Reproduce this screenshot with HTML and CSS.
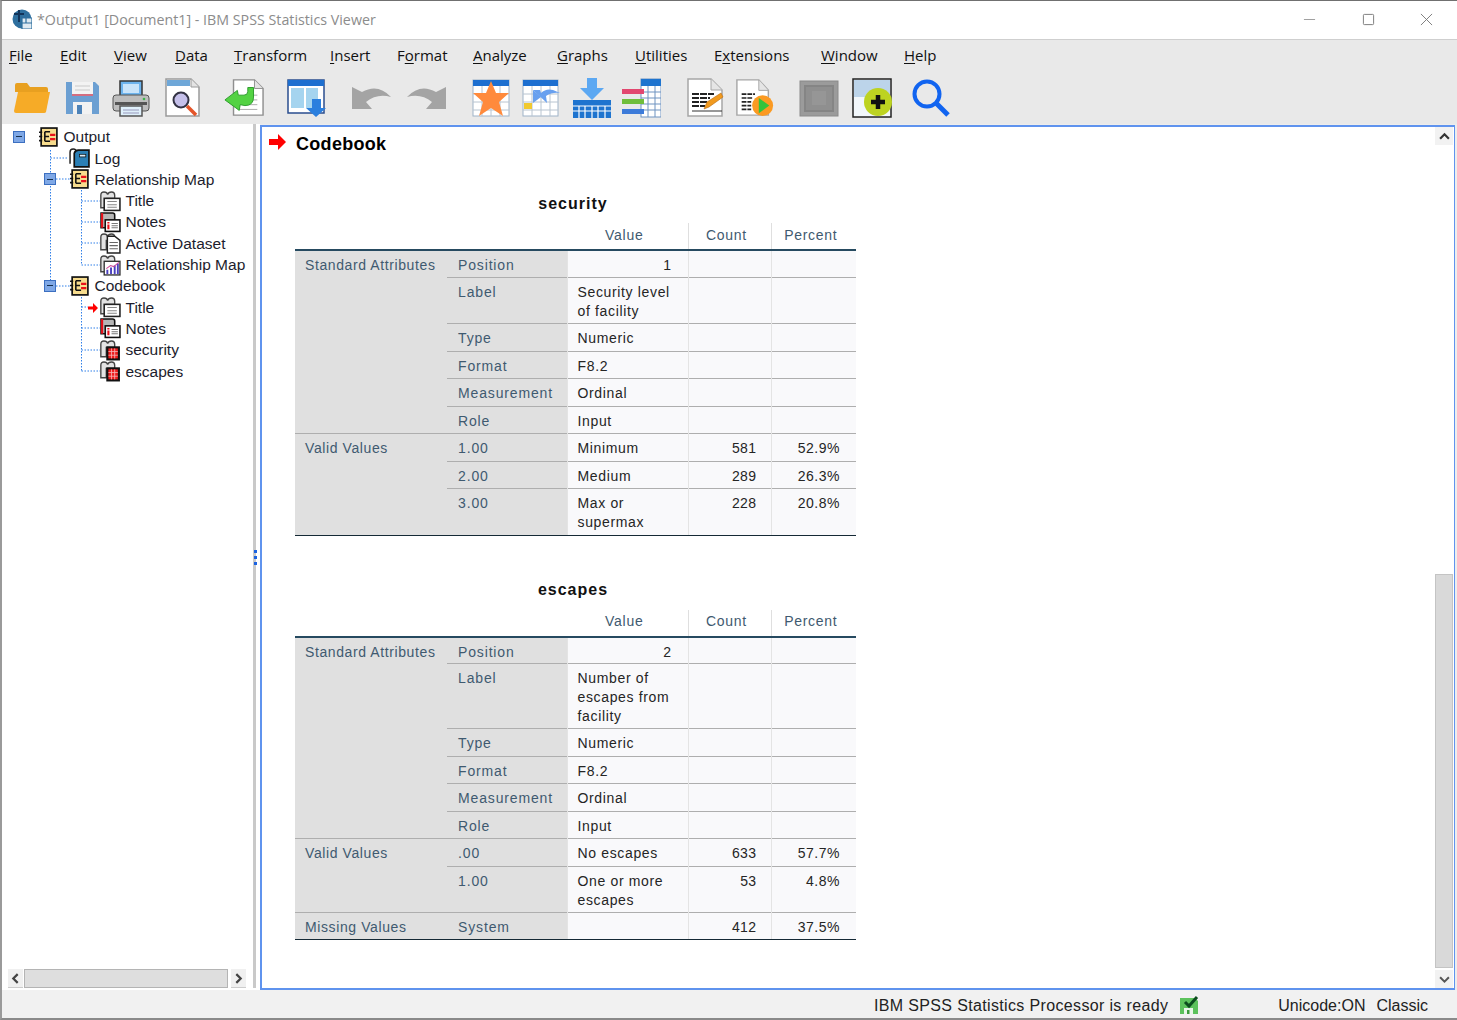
FILE: index.html
```html
<!DOCTYPE html>
<html lang="en">
<head>
<meta charset="utf-8">
<title>*Output1 [Document1] - IBM SPSS Statistics Viewer</title>
<link rel="stylesheet" href="styles.css">
</head>
<body>
<svg class="defs" width="0" height="0" aria-hidden="true">
  <defs>
    <symbol id="t-output" viewBox="0 0 20 20">
      <rect x="3" y="1" width="15" height="17" fill="#f7dc8d" stroke="#111" stroke-width="1.6"/>
      <path d="M1 5h3M1 9h3M1 13h3" stroke="#111" stroke-width="1.5"/>
      <path d="M6.5 4.5h5M6.5 4.5v9M6.5 9h4M6.5 13.500h5" stroke="#111" stroke-width="1.500" fill="none"/>
      <path d="M11.500 7.500h5M11.500 11.500h5" stroke="#e8101a" stroke-width="2.200"/>
    </symbol>
    <symbol id="t-log" viewBox="0 0 20 20">
      <path d="M1 15V4q0-3 3-3t3 3v11" fill="#fff" stroke="#222" stroke-width="1.400"/>
      <path d="M5 18V5q1-3 4-3h10v16z" fill="#2b7fb5" stroke="#111" stroke-width="1.600"/>
      <rect x="10" y="6" width="6" height="2.500" fill="#dceefa" stroke="#111" stroke-width=".7"/>
    </symbol>
    <symbol id="book" viewBox="0 0 20 20">
      <path d="M.8 16V4q0-3 3-3t3.500 2.500Q8 1 11 1t3 3v3H6v9z" fill="#e3e3e3" stroke="#444" stroke-width="1.300"/>
    </symbol>
    <symbol id="t-title" viewBox="0 0 20 20">
      <use href="#book"/>
      <rect x="4" y="7" width="15" height="11.500" fill="#fff" stroke="#222" stroke-width="1.500"/>
      <path d="M7 10h9M7 13h9M7 15.500h9" stroke="#888" stroke-width="1"/>
    </symbol>
    <symbol id="t-notes" viewBox="0 0 20 20">
      <path d="M1 15V1h11q2 0 2 2v5H6v7z" fill="#b6b6b6" stroke="#111" stroke-width="1.500"/>
      <path d="M2 1v14" stroke="#e8101a" stroke-width="2"/>
      <rect x="5" y="7.500" width="14" height="11" fill="#fff" stroke="#111" stroke-width="1.500"/>
      <path d="M8 9.500v1.500M8 12v4.500" stroke="#e8101a" stroke-width="2"/>
      <path d="M11 11h6M11 13h6M11 15h6" stroke="#777"/>
    </symbol>
    <symbol id="t-data" viewBox="0 0 20 20">
      <use href="#book"/>
      <path d="M7 3h7l5 4v12H7z" fill="#fff" stroke="#222" stroke-width="1.400"/>
      <path d="M9 9h8M9 12h8M9 15h8" stroke="#666"/>
    </symbol>
    <symbol id="t-chart" viewBox="0 0 20 20">
      <use href="#book"/>
      <rect x="4" y="6" width="15" height="13" fill="#fff" stroke="#333" stroke-width="1.300"/>
      <path d="M7 18v-4M10.500 18v-6M14 18v-8M17 18V8" stroke="#4a3fc0" stroke-width="1.800"/>
      <path d="M6 13l4-3 3 1 5-4" stroke="#d04a9a" fill="none"/>
    </symbol>
    <symbol id="t-table" viewBox="0 0 20 20">
      <use href="#book"/>
      <rect x="6" y="6" width="13" height="13.500" fill="#111"/>
      <rect x="8" y="8" width="9" height="9.500" fill="#ef1c1c"/>
      <path d="M11 8v9.500M14 8v9.500M8 11h9M8 14.500h9" stroke="#f5b5b5" stroke-width=".8"/>
    </symbol>
  </defs>
</svg>

<div class="window">
  <header class="titlebar">
    <svg class="app-icon" viewBox="0 0 20 20" aria-hidden="true">
      <circle cx="10" cy="10" r="9.500" fill="#2e6f9e"/>
      <rect x="10" y="9" width="10" height="11" fill="#dfeaf2"/>
      <path d="M2 5h10M7 1v12" stroke="#12345a" stroke-width="2"/>
      <path d="M10 9h10v11H10zM14 9v5M10 14h10" stroke="#2e6f9e" stroke-width="1.200" fill="none"/>
    </svg>
    <span class="title-text">*Output1 [Document1] - IBM SPSS Statistics Viewer</span>
    <div class="win-controls">
      <svg viewBox="0 0 14 14" aria-hidden="true"><path d="M1 7h12" stroke="#999" stroke-width="1"/></svg>
      <svg viewBox="0 0 14 14" aria-hidden="true"><rect x="1.500" y="1.500" width="11" height="11" rx="1" fill="none" stroke="#777"/></svg>
      <svg viewBox="0 0 14 14" aria-hidden="true"><path d="M1 1l12 12M13 1L1 13" stroke="#777"/></svg>
    </div>
  </header>

  <nav class="menubar">
    <span><u>F</u>ile</span><span><u>E</u>dit</span><span><u>V</u>iew</span><span><u>D</u>ata</span><span><u>T</u>ransform</span><span><u>I</u>nsert</span><span>F<u>o</u>rmat</span><span><u>A</u>nalyze</span><span><u>G</u>raphs</span><span><u>U</u>tilities</span><span>E<u>x</u>tensions</span><span><u>W</u>indow</span><span><u>H</u>elp</span>
  </nav>

  <div class="toolbar">
    <svg viewBox="0 0 40 40" aria-hidden="true"><path d="M3 7q0-2 2-2h10l3 4h16q2 0 2 2v3H3z" fill="#e8a020"/><path d="M6 14h32l-4 20q-.5 1-2 1H4q-2 0-2-2z" fill="#f6ab27"/></svg>
    <svg viewBox="0 0 40 40" aria-hidden="true"><path d="M4 4h29l4 4v28H4z" fill="#6b9fd2"/><rect x="10" y="4" width="21" height="14" fill="#f3f3f3"/><path d="M13 8h15M13 12h15" stroke="#c9c9c9"/><path d="M10 17h21" stroke="#c8405a" stroke-width="1.500"/><rect x="11" y="24" width="19" height="12" fill="#f2f2f2"/><rect x="15" y="27" width="5" height="9" fill="#4c82b8"/></svg>
    <svg viewBox="0 0 40 40" aria-hidden="true"><rect x="9" y="3" width="22" height="16" fill="#6db4ee" stroke="#333" stroke-width="1.500"/><rect x="12" y="6" width="16" height="9" fill="#c9e4fa"/><path d="M5 17h30q3 0 3 3v10q0 3-3 3H5q-3 0-3-3V20q0-3 3-3z" fill="#bdbdbd" stroke="#555"/><rect x="4" y="24" width="32" height="3" fill="#555"/><circle cx="33" cy="21" r="1.300" fill="#3cb54a"/><rect x="9" y="28" width="22" height="10" fill="#dff0fb" stroke="#555" stroke-width="1.500"/><path d="M12 32h16M12 35h16" stroke="#99b"/></svg>
    <svg viewBox="0 0 40 40" aria-hidden="true"><path d="M4 1h25l8 8v29H4z" fill="#fff" stroke="#9a9a9a" stroke-width="1.500"/><rect x="5" y="2" width="23" height="6" fill="#6ea7d8"/><path d="M29 1v8h8" fill="#e4e4e4" stroke="#9a9a9a"/><circle cx="19" cy="22" r="7.500" fill="#c5c0ea" stroke="#334" stroke-width="2"/><path d="M25 28l9 9" stroke="#e4552a" stroke-width="3.500"/></svg>
    <svg viewBox="0 0 42 40" aria-hidden="true"><path d="M10 1h22l9 9v28H10z" fill="#fff" stroke="#8f8f8f" stroke-width="1.500"/><path d="M32 1v9h9" fill="#e4e4e4" stroke="#8f8f8f"/><path d="M26 17h9M26 22h9M26 27h9M16 32h19" stroke="#ababab"/><path d="M1 22L14 12l1 5h6q4 0 4-4V9h6v10q0 9-9 9l-5-1-1 6z" fill="#53d243" stroke="#2b9b2b"/></svg>
    <svg viewBox="0 0 40 40" aria-hidden="true"><rect x="2" y="2" width="36" height="33" fill="#fff" stroke="#2a4d8f" stroke-width="1.500"/><rect x="2" y="2" width="36" height="6" fill="#1d6fd0"/><rect x="5" y="10" width="13" height="20" fill="#a5d4ef"/><rect x="20" y="10" width="12" height="20" fill="#a5d4ef"/><path d="M28 22h9v9h5l-10 9-10-9h6z" transform="translate(-2 -1)" fill="#2b7fde"/></svg>
    <svg viewBox="0 0 40 40" aria-hidden="true"><path d="M1 9v22h20l-6-7q11-9 25-5Q27 5 11 14z" fill="#a4a4a4"/></svg>
    <svg viewBox="0 0 40 40" aria-hidden="true"><path d="M39 9v22H19l6-7Q14 15 0 19q13-14 29-5z" fill="#a4a4a4"/></svg>
    <svg viewBox="0 0 40 40" aria-hidden="true"><rect x="2" y="2" width="36" height="36" fill="#fff" stroke="#9fb3c8"/><rect x="2" y="2" width="36" height="6" fill="#1d6fd0"/><path d="M2 16h36M2 24h36M2 32h36M11 8v30M20 8v30M29 8v30" stroke="#b8c4d0"/><path d="M20 3l5 12h13l-10 9 4 14-12-8-12 8 4-14-10-9h13z" fill="#ff8a3c"/></svg>
    <svg viewBox="0 0 40 40" aria-hidden="true"><rect x="2" y="2" width="35" height="36" fill="#fff" stroke="#9fb3c8"/><rect x="2" y="2" width="35" height="6" fill="#1d6fd0"/><path d="M2 16h35M2 24h35M2 32h35M11 8v30M20 8v30M29 8v30" stroke="#b8c4d0"/><rect x="3" y="25" width="8" height="6" fill="#f1c92f"/><path d="M12 12h7l1 3q5-5 12-3l7 3q-8-1-14 3l1 7z" fill="#68a0ef"/><path d="M12 12v13l8-6z" fill="#68a0ef"/></svg>
    <svg viewBox="0 0 40 40" aria-hidden="true"><path d="M15 0h10v10h7L20 22 8 10h7z" fill="#5ca8f2"/><rect x="1" y="22" width="38" height="18" fill="#1e74cf"/><path d="M1 28h38M1 33h38M7 28v12M13 28v12M20 28v12M26 28v12M33 28v12" stroke="#fff" stroke-width="1.200"/></svg>
    <svg viewBox="0 0 40 40" aria-hidden="true"><rect x="20" y="1" width="20" height="38" fill="#fff" stroke="#6f93c0"/><rect x="20" y="1" width="20" height="7" fill="#1e74cf"/><path d="M20 14h20M20 20h20M20 26h20M20 32h20M27 8v31M34 8v31" stroke="#6f93c0"/><rect x="1" y="11" width="22" height="5" fill="#e2476f"/><rect x="1" y="21" width="22" height="5" fill="#6fbe3b"/><rect x="1" y="31" width="22" height="5" fill="#3d7bd9"/></svg>
    <svg viewBox="0 0 40 40" aria-hidden="true"><path d="M3 1h23l11 11v26H3z" fill="#fff" stroke="#a6a6a6" stroke-width="1.500"/><path d="M26 1v11h11" fill="#e5e5e5" stroke="#a6a6a6"/><path d="M7 16h22M7 20h18M7 24h15M7 28h13" stroke="#222" stroke-width="1.800" stroke-dasharray="7 1"/><path d="M7 33h30" stroke="#333"/><path d="M19 31l3-7 14-9 2 4-14 10z" fill="#f19a1e" stroke="#b76a10" stroke-width=".6"/></svg>
    <svg viewBox="0 0 42 40" aria-hidden="true"><path d="M2 1h23l10 11v26H2z" fill="#fff" stroke="#a6a6a6" stroke-width="1.500"/><path d="M25 1v11h10" fill="#e5e5e5" stroke="#a6a6a6"/><path d="M7 16h14M7 20h12M7 24h10M7 28h10M7 32h10" stroke="#222" stroke-width="1.800" stroke-dasharray="5 1"/><circle cx="29" cy="28" r="11" fill="#fb9a22"/><path d="M25 20l11 8-11 8z" fill="#35c33b"/></svg>
    <svg viewBox="0 0 40 40" aria-hidden="true"><rect x="1" y="3" width="38" height="35" fill="#9b9b9b" stroke="#8a8a8a"/><rect x="6" y="8" width="28" height="25" fill="#8f8f8f" stroke="#858585" stroke-width="2"/><rect x="13" y="13" width="14" height="14" fill="#969696"/></svg>
    <svg viewBox="0 0 40 40" aria-hidden="true"><rect x="1" y="1" width="38" height="38" fill="#f2f7fb" stroke="#222" stroke-width="1.500"/><rect x="2" y="2" width="36" height="17" fill="#bcd4ea"/><circle cx="26" cy="24" r="14" fill="#bdd321"/><path d="M26 17v14M19 24h14" stroke="#111" stroke-width="4.500"/></svg>
    <svg viewBox="0 0 40 40" aria-hidden="true"><circle cx="16" cy="16" r="12.500" fill="none" stroke="#1164f0" stroke-width="4"/><path d="M25 25l12 12" stroke="#1164f0" stroke-width="5"/></svg>
  </div>

  <main class="panes">
    <aside class="outline">
      <div class="tree">
        <svg class="tree-lines" aria-hidden="true">
          <g fill="none" stroke="#2f7fe8" stroke-dasharray="1.500 1.500">
            <path d="M50.500 150V286M50.500 158H68M56 179H70M56 286H70M81.500 190V265M81.500 201H100M81.500 222H100M81.500 243H100M81.500 265H100M81.500 297V371M81.500 307H88M81.500 328H100M81.500 350H100M81.500 371H100"/>
          </g>
        </svg>
        <div class="node l0"><span class="toggle"></span><svg class="ni"><use href="#t-output"/></svg><span>Output</span></div>
        <div class="node l1"><svg class="ni"><use href="#t-log"/></svg><span>Log</span></div>
        <div class="node l1"><span class="toggle"></span><svg class="ni"><use href="#t-output"/></svg><span>Relationship Map</span></div>
        <div class="node l2"><svg class="ni"><use href="#t-title"/></svg><span>Title</span></div>
        <div class="node l2"><svg class="ni"><use href="#t-notes"/></svg><span>Notes</span></div>
        <div class="node l2"><svg class="ni"><use href="#t-data"/></svg><span>Active Dataset</span></div>
        <div class="node l2"><svg class="ni"><use href="#t-chart"/></svg><span>Relationship Map</span></div>
        <div class="node l1"><span class="toggle"></span><svg class="ni"><use href="#t-output"/></svg><span>Codebook</span></div>
        <div class="node l2"><svg class="tree-arrow" viewBox="0 0 10 10" aria-hidden="true"><path d="M0 3.500h5V0l5 5-5 5V6.500H0z" fill="#f00"/></svg><svg class="ni"><use href="#t-title"/></svg><span>Title</span></div>
        <div class="node l2"><svg class="ni"><use href="#t-notes"/></svg><span>Notes</span></div>
        <div class="node l2"><svg class="ni"><use href="#t-table"/></svg><span>security</span></div>
        <div class="node l2"><svg class="ni"><use href="#t-table"/></svg><span>escapes</span></div>
      </div>
      <div class="hscroll">
        <span class="sbtn"><svg viewBox="0 0 10 10" aria-hidden="true"><path d="M7 1L3 5l4 4" fill="none" stroke="#444" stroke-width="2"/></svg></span>
        <span class="hthumb"></span>
        <span class="sbtn"><svg viewBox="0 0 10 10" aria-hidden="true"><path d="M3 1l4 4-4 4" fill="none" stroke="#444" stroke-width="2"/></svg></span>
      </div>
    </aside>

    <div class="splitter"><span class="grip"></span></div>

    <section class="viewer">
      <div class="doc">
        <div class="heading">
          <svg viewBox="0 0 17 16" aria-hidden="true"><path d="M0 5h9V0l8 8-8 8v-5H0z" fill="#f00"/></svg>
          <h1>Codebook</h1>
        </div>

        <h2 class="tbl-title first">security</h2>
        <table class="pivot">
          <colgroup><col class="c1"><col class="c2"><col class="c3"><col class="c4"><col class="c5"></colgroup>
          <thead><tr class="h27"><th class="blank" colspan="2"></th><th>Value</th><th>Count</th><th>Percent</th></tr></thead>
          <tbody>
            <tr class="h27"><td class="lab k" rowspan="6">Standard Attributes</td><td class="lab">Position</td><td class="num v">1</td><td></td><td></td></tr>
            <tr class="h46"><td class="lab">Label</td><td>Security level<br>of facility</td><td></td><td></td></tr>
            <tr class="h28"><td class="lab">Type</td><td>Numeric</td><td></td><td></td></tr>
            <tr class="h27"><td class="lab">Format</td><td>F8.2</td><td></td><td></td></tr>
            <tr class="h28"><td class="lab">Measurement</td><td>Ordinal</td><td></td><td></td></tr>
            <tr class="h27"><td class="lab">Role</td><td>Input</td><td></td><td></td></tr>
            <tr class="h28"><td class="lab k" rowspan="3">Valid Values</td><td class="lab">1.00</td><td>Minimum</td><td class="num">581</td><td class="num p">52.9%</td></tr>
            <tr class="h27"><td class="lab">2.00</td><td>Medium</td><td class="num">289</td><td class="num p">26.3%</td></tr>
            <tr class="h47"><td class="lab">3.00</td><td>Max or<br>supermax</td><td class="num">228</td><td class="num p">20.8%</td></tr>
          </tbody>
        </table>

        <h2 class="tbl-title next">escapes</h2>
        <table class="pivot">
          <colgroup><col class="c1"><col class="c2"><col class="c3"><col class="c4"><col class="c5"></colgroup>
          <thead><tr class="h27"><th class="blank" colspan="2"></th><th>Value</th><th>Count</th><th>Percent</th></tr></thead>
          <tbody>
            <tr class="h27"><td class="lab k" rowspan="6">Standard Attributes</td><td class="lab">Position</td><td class="num v">2</td><td></td><td></td></tr>
            <tr class="h65"><td class="lab">Label</td><td>Number of<br>escapes from<br>facility</td><td></td><td></td></tr>
            <tr class="h28"><td class="lab">Type</td><td>Numeric</td><td></td><td></td></tr>
            <tr class="h27"><td class="lab">Format</td><td>F8.2</td><td></td><td></td></tr>
            <tr class="h28"><td class="lab">Measurement</td><td>Ordinal</td><td></td><td></td></tr>
            <tr class="h27"><td class="lab">Role</td><td>Input</td><td></td><td></td></tr>
            <tr class="h28"><td class="lab k" rowspan="2">Valid Values</td><td class="lab">.00</td><td>No escapes</td><td class="num">633</td><td class="num p">57.7%</td></tr>
            <tr class="h46"><td class="lab">1.00</td><td>One or more<br>escapes</td><td class="num">53</td><td class="num p">4.8%</td></tr>
            <tr class="h27"><td class="lab k">Missing Values</td><td class="lab">System</td><td></td><td class="num">412</td><td class="num p">37.5%</td></tr>
          </tbody>
        </table>
      </div>

      <div class="vscroll">
        <span class="vbtn"><svg viewBox="0 0 10 10" aria-hidden="true"><path d="M1 7l4-4 4 4" fill="none" stroke="#333" stroke-width="2"/></svg></span>
        <span class="vtrack"><span class="vthumb"></span></span>
        <span class="vbtn"><svg viewBox="0 0 10 10" aria-hidden="true"><path d="M1 3l4 4 4-4" fill="none" stroke="#555" stroke-width="1.800"/></svg></span>
      </div>
    </section>
  </main>

  <footer class="status">
    <span class="st-proc">IBM SPSS Statistics Processor is ready</span>
    <svg class="st-icon" viewBox="0 0 20 20" aria-hidden="true"><path d="M1 3h15l3 3v13H1z" fill="#5cc25c"/><rect x="5" y="13" width="9" height="6" fill="#e9f6e9"/><rect x="8" y="15" width="2.500" height="4" fill="#3c9c3c"/><path d="M6 7l4 4 8-9" fill="none" stroke="#0c4d1e" stroke-width="3"/></svg>
    <span class="st-uni">Unicode:ON</span>
    <span class="st-cl">Classic</span>
  </footer>
</div>
</body>
</html>
```

FILE: styles.css
```css
* { box-sizing: border-box; }
html, body { margin: 0; padding: 0; }
body { width: 1457px; height: 1020px; overflow: hidden; background: #f1f1f1; font-family: "Liberation Sans", Arial, sans-serif; }
.defs { position: absolute; }

.window { width: 1457px; height: 1020px; display: flex; flex-direction: column; border-top: 1px solid #707070; border-left: 2px solid #9a9a9a; border-bottom: 2px solid #8a8a8a; }

.titlebar { flex: 0 0 39px; display: flex; align-items: center; background: #fff; border-bottom: 1px solid #cfcfcf; padding: 0 0 2px 10px; }
.app-icon { width: 20px; height: 20px; margin-right: 5px; }
.title-text { font-family: "Open Sans", sans-serif; font-size: 14.250px; color: #8c8c8c; }
.win-controls { margin-left: auto; display: flex; gap: 45.500px; padding-right: 24px; }
.win-controls svg { width: 13px; height: 13px; }

.menubar { flex: 0 0 31px; display: grid; grid-template-columns: 51px 54px 61px 59px 96px 67px 76px 84px 78px 79px 107px 83px auto; align-items: center; padding: 0 0 2px 7px; background: #e9e9e9; font-family: "Open Sans", sans-serif; font-size: 15px; color: #111; }
.menubar u { text-underline-offset: 2px; }

.toolbar { flex: 0 0 53px; display: grid; grid-template-columns: 50px 49px 51px 62px 62px 65px 56px 64px 50px 51px 49px 64px 50px 64px 53px 59px 40px; align-items: start; padding: 7px 0 0 10px; background: #e9e9e9; }
.toolbar svg { width: 40px; height: 40px; display: block; }

.panes { flex: 1; min-height: 0; display: flex; background: #ededed; }

.outline { width: 250px; display: flex; flex-direction: column; background: #fff; }
.tree { position: relative; flex: 1; padding-top: 2.600px; font-size: 15.500px; color: #1d1d2d; }
.tree-lines { position: absolute; left: -2px; top: -124px; width: 250px; height: 500px; pointer-events: none; }
.node { position: relative; height: 21.300px; display: flex; align-items: center; gap: 4.500px; white-space: nowrap; }
.node.l0 { padding-left: 36px; }
.node.l1 { padding-left: 67px; }
.node.l2 { padding-left: 98px; }
.ni { width: 21px; height: 21px; flex: none; }
.toggle { position: absolute; top: 4px; width: 12px; height: 12px; background: #7fa8e6; border: 1px solid #3c6fc0; }
.toggle::after { content: ""; position: absolute; left: 2px; right: 2px; top: 4.500px; height: 1px; background: #15304f; }
.l0 .toggle { left: 11px; }
.l1 .toggle { left: 42px; }
.tree-arrow { position: absolute; left: 86px; top: 6px; width: 10px; height: 10px; }

.hscroll { flex: 0 0 19px; margin: 0 6px 2px 6px; display: flex; gap: 1px; }
.sbtn { width: 15px; background: #f0f0f0; display: flex; align-items: center; justify-content: center; border-bottom: 1px solid #ccc; }
.sbtn:last-child { margin-left: 2px; }
.sbtn svg { width: 11px; height: 11px; }
.hthumb { flex: 1; background: #dedede; border: 1px solid #b4b4b4; }

.splitter { width: 8px; position: relative; background: #fff; }
.splitter::before { content: ""; position: absolute; left: 1px; top: 0; bottom: 2px; width: 3px; background: #c9c9c9; }
.grip { position: absolute; left: 2px; top: 426px; width: 3px; height: 15px; background: repeating-linear-gradient(#1c63e0 0 3px, transparent 3px 6px); }

.viewer { flex: 1; display: flex; margin: 1px 2px 0 0; background: #fff; border: 2px solid #5f93ee; border-right-width: 1px; }

.doc { flex: 1; padding-left: 33px; }
.heading { display: flex; align-items: center; height: 30px; margin-left: -26px; gap: 10px; padding-top: 4px; }
.heading svg { width: 17px; height: 16px; margin-top: -5px; }
.heading h1 { margin: 0; font-size: 18px; font-weight: 700; color: #000; letter-spacing: .3px; }

.tbl-title { width: 561px; margin: 0; padding: 0 5px 10px 0; height: 66px; display: flex; align-items: flex-end; justify-content: center; font-size: 16px; font-weight: 700; letter-spacing: 1px; color: #111; }
.tbl-title.next { height: 74px; padding-bottom: 11px; }

.pivot { width: 561px; table-layout: fixed; border-collapse: collapse; border-bottom: 1px solid #152935; font-size: 14px; line-height: 19px; letter-spacing: .65px; color: #252525; }
.c1 { width: 152px; } .c2 { width: 120px; } .c3 { width: 121px; } .c4 { width: 83px; } .c5 { width: 85px; }
.pivot th { font-weight: 400; letter-spacing: .7px; color: #3f5a70; background: #fff; border-left: 1px solid #dfdfdf; border-bottom: 2px solid #264a60; padding: 0 6px 2px 0; text-align: center; }
.pivot th.blank { border-left: 0; }
.pivot th:nth-child(2) { border-left: 0; }
.pivot td { vertical-align: top; padding: 5px 10px 0; background: #f9f9fb; border-top: 1px solid #aeaeae; border-left: 1px solid #e4e4e4; overflow: hidden; white-space: nowrap; }
.pivot td.lab { background: #e0e0e0; color: #3f5a70; border-left: 0; padding-left: 11px; letter-spacing: .85px; }
.pivot td.k { padding-left: 10px; letter-spacing: .6px; }
.pivot td.num { text-align: right; padding-right: 14px; letter-spacing: .4px; }
.pivot td.num.p { padding-right: 16px; letter-spacing: .5px; }
.pivot td.num.v { padding-right: 16px; }
.pivot tbody tr:first-child td { border-top: 0; }
.pivot tbody tr:last-child td { border-bottom: 1px solid #152935; }
.h27 { height: 27px; } .h28 { height: 28px; } .h46 { height: 46px; } .h47 { height: 47px; } .h65 { height: 65px; }

.vscroll { flex: 0 0 18px; display: flex; flex-direction: column; margin-right: 1px; }
.vbtn { flex: 0 0 18px; display: flex; align-items: center; justify-content: center; background: #f2f2f2; }
.vbtn svg { width: 11px; height: 11px; }
.vtrack { flex: 1; background: #fff; display: flex; flex-direction: column; justify-content: flex-end; }
.vthumb { height: 394px; margin-bottom: 2px; background: #d9d9d9; border: 1px solid #c4c4c4; }

.status { flex: 0 0 28px; display: flex; align-items: center; background: #f1f1f1; font-size: 16px; color: #222; padding: 4px 0 0 872px; }
.st-proc { letter-spacing: .35px; }
.st-icon { width: 20px; height: 20px; margin-left: 11px; margin-top: -3px; }
.st-uni { margin-left: 79px; }
.st-cl { margin-left: 11px; }
```
